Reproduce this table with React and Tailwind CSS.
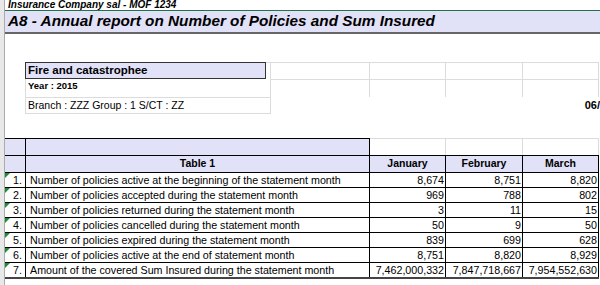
const rows = [
  ["1.", "Number of policies active at the beginning of the statement month", "8,674", "8,751", "8,820"],
  ["2.", "Number of policies accepted during the statement month", "969", "788", "802"],
  ["3.", "Number of policies returned during the statement month", "3", "11", "15"],
  ["4.", "Number of policies cancelled during the statement month", "50", "9", "50"],
  ["5.", "Number of policies expired during the statement month", "839", "699", "628"],
  ["6.", "Number of policies active at the end of statement month", "8,751", "8,820", "8,929"],
  ["7.", "Amount of the covered Sum Insured during the statement month", "7,462,000,332", "7,847,718,667", "7,954,552,630"],
];

const GridCell = ({ w, top = true }) => (
  <div className={`${w} h-full border-r border-[#dcdcdc] ${top ? "border-t" : ""}`} />
);

const App = () => {
  return (
    <div className="w-[600px] h-[285px] overflow-hidden flex bg-white text-black font-['Liberation_Sans',Arial,sans-serif]">
      {/* row headers strip */}
      <div className="w-[5px] shrink-0 bg-[#e8e8e8] border-r border-[#ababab]" />

      <div className="w-[595px] flex flex-col">
        {/* company line */}
        <div className="h-[11px] border-b border-[#217346] pl-[3px] text-[10px] leading-[10px] font-bold italic whitespace-nowrap">
          Insurance Company sal - MOF 1234
        </div>

        {/* title */}
        <div className="h-[23px] bg-[#e1e1f7] border-b-2 border-[#666666] flex items-center pl-[3px] text-[15.3px] font-bold italic whitespace-nowrap">
          A8 - Annual report on Number of Policies and Sum Insured
        </div>

        <div className="h-[28px]" />

        {/* report info */}
        <div className="h-[17px] flex">
          <div className="w-[20px]" />
          <div className="w-[241px] h-full border border-[#333333] bg-[#e1e1f7] pl-[2px] text-[11.5px] leading-[15px] font-bold whitespace-nowrap">
            Fire and catastrophee
          </div>
          <GridCell w="w-[5px]" />
          <GridCell w="w-[99px]" />
          <GridCell w="w-[76px]" />
          <GridCell w="w-[77px]" />
          <GridCell w="w-[76px]" />
        </div>
        <div className="h-[18px] flex">
          <div className="w-[20px]" />
          <div className="w-[246px] h-full border-l border-r border-[#dcdcdc] pl-[2px] pt-[1px] text-[9.5px] leading-[11px] font-bold whitespace-nowrap">
            Year : 2015
          </div>
          <GridCell w="w-[99px]" />
          <GridCell w="w-[76px]" />
          <GridCell w="w-[77px]" />
          <GridCell w="w-[76px]" />
        </div>
        <div className="h-[17px] flex">
          <div className="w-[20px]" />
          <div className="w-[246px] h-full border border-[#dcdcdc] pl-[2px] text-[10.5px] leading-[15px] whitespace-nowrap">
            Branch : ZZZ Group : 1 S/CT : ZZ
          </div>
          <div className="flex-1 flex justify-end items-center text-[11px] font-bold whitespace-nowrap">
            06/
          </div>
        </div>

        <div className="h-[24px]" />

        {/* table */}
        <div className="flex h-[17px]">
          <div className="w-[21px] bg-[#e1e1f7] border-t border-r border-black" />
          <div className="w-[344px] bg-[#e1e1f7] border-t border-r border-black" />
          <GridCell w="w-[76px]" />
          <GridCell w="w-[77px]" />
          <GridCell w="w-[76px]" />
        </div>
        <div className="flex h-[18px] border-t border-b border-black bg-[#e1e1f7] w-[594px] text-[10.5px] font-bold">
          <div className="w-[21px] border-r border-black" />
          <div className="w-[344px] border-r border-black flex items-center justify-center">Table 1</div>
          <div className="w-[76px] border-r border-black flex items-center justify-center">January</div>
          <div className="w-[77px] border-r border-black flex items-center justify-center">February</div>
          <div className="w-[76px] border-r border-black flex items-center justify-center">March</div>
        </div>
        {rows.map((r, i) => (
          <div
            key={r[0]}
            className={`flex w-[594px] text-[10.7px] leading-[14px] ${i === rows.length - 1 ? "h-[16px] border-b-2 border-[#444444]" : "h-[15px] border-b border-black"}`}
          >
            <div className="relative w-[21px] border-r border-black text-right pr-[3px]">
              <span className="absolute left-0 top-0 w-0 h-0 border-t-[5px] border-r-[5px] border-t-[#1f8a3a] border-r-transparent" />
              {r[0]}
            </div>
            <div className="w-[344px] border-r border-black pl-[4px] whitespace-nowrap overflow-hidden">{r[1]}</div>
            <div className="w-[76px] border-r border-black text-right pr-[1px]">{r[2]}</div>
            <div className="w-[77px] border-r border-black text-right pr-[1px]">{r[3]}</div>
            <div className="w-[76px] border-r border-black text-right pr-[1px]">{r[4]}</div>
          </div>
        ))}
      </div>
    </div>
  );
};

export default App;
